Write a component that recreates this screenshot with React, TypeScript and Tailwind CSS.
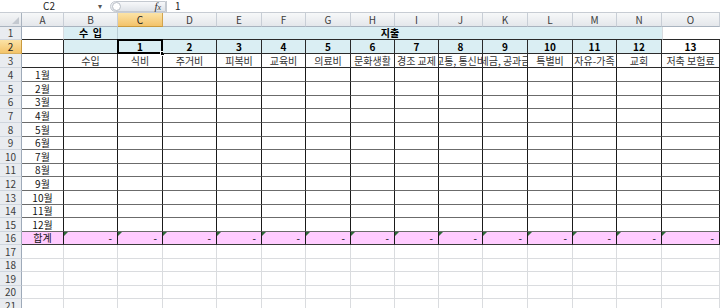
import React from "react"

const cols = ["A", "B", "C", "D", "E", "F", "G", "H", "I", "J", "K", "L", "M", "N", "O"]
const widths = [
  "w-[42px]", "w-[54px]", "w-[45px]", "w-[54px]", "w-[45px]", "w-[44px]", "w-[45px]", "w-[44px]",
  "w-[44px]", "w-[44px]", "w-[45px]", "w-[45px]", "w-[44px]", "w-[45px]", "w-[58px]",
]
const labels = ["식비", "주거비", "피복비", "교육비", "의료비", "문화생활", "경조 교제", "교통, 통신비", "세금, 공과금", "특별비", "자유-가족", "교회", "저축 보험료"]
const monthHeights = ["h-[14px]", "h-[14px]", "h-[13px]", "h-[14px]", "h-[14px]", "h-[13px]", "h-[14px]", "h-[13px]", "h-[14px]", "h-[14px]", "h-[13px]", "h-[14px]"]
const emptyHeights = ["h-[14px]", "h-[13px]", "h-[14px]", "h-[13px]", "h-[14px]"]

const font = "font-['Noto_Sans_CJK_KR','Noto_Sans',sans-serif]"

const RowHead = ({ n, h, active }: { n: number; h: string; active?: boolean }) => (
  <div
    className={`${h} w-[22px] shrink-0 flex items-center justify-center text-[10px] leading-none border-r border-b ${
      active
        ? "bg-gradient-to-b from-[#fbe3a6] to-[#f3c369] text-[#222] border-r-[#c99a3e] border-b-[#d9b163]"
        : "bg-[#e9ecf0] text-[#3c3c3c] border-r-[#9eaab9] border-b-[#cfd5dd]"
    }`}
  >
    {n}
  </div>
)

export default function App() {
  return (
    <div className={`w-[720px] h-[308px] overflow-hidden bg-white ${font} text-black select-none`}>
      {/* formula bar */}
      <div className="h-[13px] flex items-center border-b border-[#c7ccd3] text-[10px] leading-none">
        <div className="w-[98px] text-center text-[#222]">C2</div>
        <div className="w-[12px] text-[8px] text-[#555]">▾</div>
        <div className="h-[11px] w-[56px] flex items-center rounded-l-full bg-gradient-to-b from-[#f7f8fa] to-[#dfe3e8] border border-[#c4c9d0]">
          <span className="ml-[1px] w-[9px] h-[9px] rounded-full border border-[#b8bec6] bg-white" />
          <span className="ml-auto mr-[4px] italic font-['Liberation_Serif',serif] text-[11px] text-[#333]">
            f<span className="text-[8px]">x</span>
          </span>
        </div>
        <div className="w-px h-[11px] bg-[#c4c9d0]" />
        <div className="ml-[8px] text-[#222]">1</div>
      </div>

      {/* column headers */}
      <div className="flex h-[14px]">
        <div className="w-[22px] shrink-0 relative bg-gradient-to-b from-[#f5f6f7] to-[#e2e5e9] border-r border-b border-[#a9b3bf]">
          <div className="absolute right-[2px] bottom-[2px] w-0 h-0 border-l-[7px] border-l-transparent border-b-[7px] border-b-[#c3c8cf]" />
        </div>
        {cols.map((c, i) => (
          <div
            key={c}
            className={`${widths[i]} shrink-0 flex items-center justify-center text-[10px] leading-none border-r border-b ${
              c === "C"
                ? "bg-gradient-to-b from-[#fbe3a6] to-[#f3c369] text-[#222] border-r-[#d2a44e] border-b-[#c99a3e]"
                : "bg-gradient-to-b from-[#f7f8f9] to-[#e4e7eb] text-[#3c3c3c] border-r-[#c8ced6] border-b-[#a9b3bf]"
            }`}
          >
            {c}
          </div>
        ))}
      </div>

      {/* row 1 */}
      <div className="flex">
        <RowHead n={1} h="h-[13px]" />
        <div className="h-[13px] w-[42px] shrink-0 border-r border-r-[#d8dbdf] border-b border-b-[#2a2a2a]" />
        <div className="h-[13px] w-[54px] shrink-0 bg-[#daeef3] flex items-center justify-center text-[10px] font-bold leading-none border-r border-r-[#b9cdd5] border-b border-b-[#2a2a2a]">
          수&nbsp;&nbsp;입
        </div>
        <div className="h-[13px] w-[544px] shrink-0 bg-[#daeef3] flex items-center justify-center text-[10px] font-bold leading-none border-b border-b-[#2a2a2a]">
          지출
        </div>
        <div className="h-[13px] w-[58px] shrink-0 border-l border-l-[#d8dbdf] border-b border-b-[#2a2a2a]" />
      </div>

      {/* row 2 */}
      <div className="flex">
        <RowHead n={2} h="h-[14px]" active />
        <div className="h-[14px] w-[42px] shrink-0 border-r border-b border-[#2a2a2a]" />
        <div className="h-[14px] w-[54px] shrink-0 bg-[#daeef3] border-r border-b border-[#2a2a2a]" />
        {labels.map((_, i) => (
          <div
            key={i}
            className={`${widths[i + 2]} h-[14px] shrink-0 relative flex items-center justify-center text-[10px] font-bold leading-none border-r border-b border-[#2a2a2a] ${
              i === 12 ? "bg-white" : "bg-[#daeef3]"
            }`}
          >
            {i + 1}
            {i === 0 && (
              <>
                <div className="absolute -left-px -top-px -right-px -bottom-px border-2 border-black" />
                <div className="absolute -right-[3px] -bottom-[3px] w-[5px] h-[5px] bg-black border border-white" />
              </>
            )}
          </div>
        ))}
      </div>

      {/* row 3 */}
      <div className="flex">
        <RowHead n={3} h="h-[14px]" />
        <div className="h-[14px] w-[42px] shrink-0 border-r border-r-[#2a2a2a] border-b border-b-[#2a2a2a]" />
        <div className="h-[14px] w-[54px] shrink-0 flex items-center justify-center text-[10px] leading-none text-[#333] border-r border-b border-[#2a2a2a]">
          수입
        </div>
        {labels.map((l, i) => (
          <div
            key={l}
            className={`${widths[i + 2]} h-[14px] shrink-0 flex items-center justify-center overflow-hidden whitespace-nowrap text-[10px] leading-none text-[#333] border-r border-b border-[#2a2a2a]`}
          >
            {l}
          </div>
        ))}
      </div>

      {/* months */}
      {monthHeights.map((h, r) => (
        <div key={r} className="flex">
          <RowHead n={r + 4} h={h} />
          <div className={`${h} w-[42px] shrink-0 flex items-center justify-center text-[10px] leading-none text-[#111] border-r border-r-[#1a1a1a] border-b border-b-[#6b6b6b]`}>
            {r + 1}월
          </div>
          {widths.slice(1).map((w, i) => (
            <div key={i} className={`${w} ${h} shrink-0 border-r border-r-[#1a1a1a] border-b border-b-[#6b6b6b]`} />
          ))}
        </div>
      ))}

      {/* total */}
      <div className="flex">
        <RowHead n={16} h="h-[13px]" />
        <div className="h-[13px] w-[42px] shrink-0 bg-[#ffccff] flex items-center justify-center text-[10px] leading-none text-[#111] border-r border-r-[#1a1a1a] border-b border-b-[#3a3a3a]">
          합계
        </div>
        {widths.slice(1).map((w, i) => (
          <div
            key={i}
            className={`${w} h-[13px] shrink-0 relative bg-[#ffccff] flex items-center justify-end pr-[5px] text-[10px] leading-none border-r border-r-[#1a1a1a] border-b border-b-[#3a3a3a]`}
          >
            <div className="absolute left-0 top-0 w-0 h-0 border-t-[4px] border-t-[#2f6b3a] border-r-[4px] border-r-transparent" />
            -
          </div>
        ))}
      </div>

      {/* empty rows */}
      {emptyHeights.map((h, r) => (
        <div key={r} className="flex">
          <RowHead n={r + 17} h={h} />
          {widths.map((w, i) => (
            <div key={i} className={`${w} ${h} shrink-0 border-r border-b border-[#dadcdf]`} />
          ))}
        </div>
      ))}
    </div>
  )
}
